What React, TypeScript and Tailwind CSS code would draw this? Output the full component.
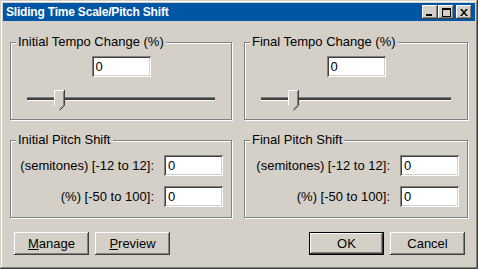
import React from "react";

const FACE = "bg-[#d4d0c8]";
const raised =
  "shadow-[inset_-1px_-1px_#404040,inset_1px_1px_#ffffff,inset_-2px_-2px_#808080,inset_2px_2px_#d4d0c8]";
const sunken =
  "shadow-[inset_1px_1px_#808080,inset_-1px_-1px_#ffffff,inset_2px_2px_#404040,inset_-2px_-2px_#d4d0c8]";

const TitleButton = ({ children }: { children: React.ReactNode }) => (
  <div className={`w-[16px] h-[14px] ${FACE} ${raised} flex items-center justify-center`}>
    {children}
  </div>
);

const TitleBar = () => (
  <div className="h-[18px] bg-[#0055a5] flex items-center justify-between pl-[3px] pr-[3px]">
    <span className="text-white font-bold text-[12px] leading-none tracking-[-0.2px] scale-y-110 origin-left">
      Sliding Time Scale/Pitch Shift
    </span>
    <div className="flex items-center">
      <TitleButton>
        <svg width="8" height="7" viewBox="0 0 8 7">
          <rect x="0" y="5" width="6" height="2" fill="#000" />
        </svg>
      </TitleButton>
      <TitleButton>
        <svg width="9" height="9" viewBox="0 0 9 9">
          <rect x="0" y="0" width="9" height="2" fill="#000" />
          <rect x="0.5" y="0.5" width="8" height="8" fill="none" stroke="#000" />
        </svg>
      </TitleButton>
      <div className="w-[2px]" />
      <TitleButton>
        <svg width="8" height="7" viewBox="0 0 8 7">
          <path d="M0 0h2l2 2.5L6 0h2L5 3.5 8 7H6L4 4.5 2 7H0l3-3.5z" fill="#000" />
        </svg>
      </TitleButton>
    </div>
  </div>
);

const GroupBox = ({
  label,
  children,
  className = "",
}: {
  label: string;
  children: React.ReactNode;
  className?: string;
}) => (
  <div
    className={`relative h-[78px] border border-[#808080] shadow-[1px_1px_0_#ffffff,inset_1px_1px_0_#ffffff] ${className}`}
  >
    <span className={`absolute -top-[9px] left-[5px] px-[2px] ${FACE} leading-[16px]`}>{label}</span>
    {children}
  </div>
);

const TextBox = ({ value, className = "" }: { value: string; className?: string }) => (
  <div className={`h-[21px] bg-white ${sunken} flex items-center pl-[4px] ${className}`}>{value}</div>
);

const Slider = ({ thumbLeft }: { thumbLeft: number }) => (
  <div className="relative h-[21px] mx-[16px]">
    <div className="absolute left-0 right-0 top-[7px] h-[4px] bg-[#404040] border-t border-t-[#808080] border-b border-b-white" />
    <svg
      className="absolute top-0"
      style={{ left: thumbLeft }}
      width="11"
      height="21"
      viewBox="0 0 11 21"
    >
      <path d="M0.5 0.5H10.5V15.5L5.5 20.5L0.5 15.5Z" fill="#d4d0c8" />
      <path d="M0.5 15.5V0.5H10" fill="none" stroke="#ffffff" />
      <path d="M10.5 0V15.5L5.5 20.5" fill="none" stroke="#404040" />
      <path d="M9.5 1V15L5.5 19" fill="none" stroke="#808080" />
    </svg>
  </div>
);

const TempoGroup = ({ label, className }: { label: string; className?: string }) => (
  <GroupBox label={label} className={className}>
    <div className="flex flex-col pt-[13px]">
      <div className="flex justify-center">
        <TextBox value="0" className="w-[59px]" />
      </div>
      <div className="mt-[13px]">
        <Slider thumbLeft={27} />
      </div>
    </div>
  </GroupBox>
);

const PitchGroup = ({ label, className }: { label: string; className?: string }) => (
  <GroupBox label={label} className={className}>
    <div className="flex flex-col gap-[10px] pt-[14px] pr-[8px]">
      <div className="flex items-center justify-end gap-[10px]">
        <span>(semitones) [-12 to 12]:</span>
        <TextBox value="0" className="w-[59px]" />
      </div>
      <div className="flex items-center justify-end gap-[10px]">
        <span>(%) [-50 to 100]:</span>
        <TextBox value="0" className="w-[59px]" />
      </div>
    </div>
  </GroupBox>
);

const Button = ({
  children,
  isDefault = false,
}: {
  children: React.ReactNode;
  isDefault?: boolean;
}) => (
  <div
    className={`w-[75px] h-[23px] ${FACE} flex items-center justify-center ${
      isDefault
        ? "shadow-[inset_0_0_0_1px_#000000,inset_-2px_-2px_#404040,inset_2px_2px_#ffffff,inset_-3px_-3px_#808080]"
        : raised
    }`}
  >
    {children}
  </div>
);

export default function App() {
  return (
    <div
      className={`w-[478px] h-[269px] ${FACE} p-[3px] flex flex-col text-[13px] text-black font-['Liberation_Sans',Arial,sans-serif] shadow-[inset_-1px_-1px_#404040,inset_1px_1px_#d4d0c8,inset_-2px_-2px_#808080,inset_2px_2px_#ffffff]`}
    >
      <TitleBar />
      <div className="flex flex-col pt-[21px] pl-[7px]">
        <div className="flex gap-[12px]">
          <TempoGroup label="Initial Tempo Change (%)" className="w-[222px]" />
          <TempoGroup label="Final Tempo Change (%)" className="w-[224px]" />
        </div>
        <div className="flex gap-[12px] mt-[20px]">
          <PitchGroup label="Initial Pitch Shift" className="w-[222px]" />
          <PitchGroup label="Final Pitch Shift" className="w-[224px]" />
        </div>
        <div className="flex items-center mt-[14px] pl-[4px] pr-[6px] w-[461px]">
          <div className="flex gap-[6px]">
            <Button>
              <span>
                <span className="underline">M</span>anage
              </span>
            </Button>
            <Button>
              <span>
                <span className="underline">P</span>review
              </span>
            </Button>
          </div>
          <div className="flex gap-[6px] ml-auto">
            <Button isDefault>OK</Button>
            <Button>Cancel</Button>
          </div>
        </div>
      </div>
    </div>
  );
}
